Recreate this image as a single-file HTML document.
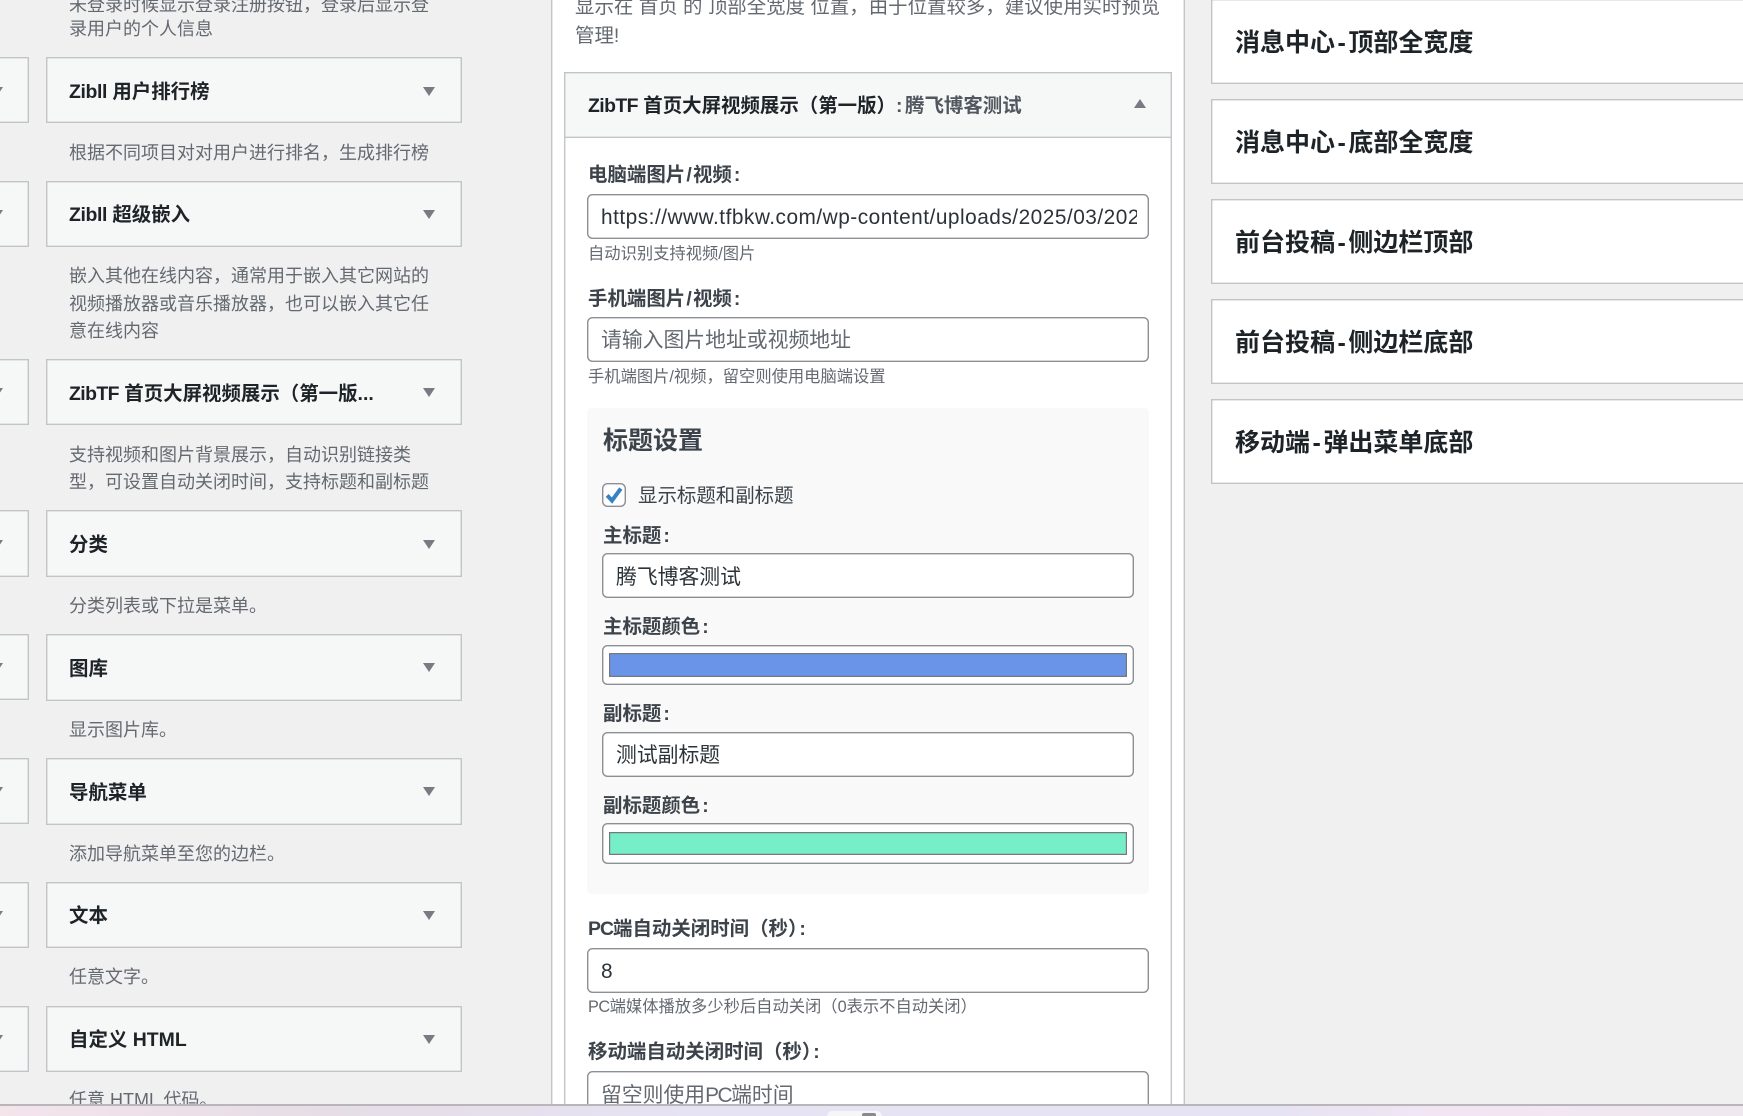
<!DOCTYPE html>
<html lang="zh-CN">
<head>
<meta charset="utf-8">
<title>小工具</title>
<style>
html,body{margin:0;padding:0;width:1743px;height:1116px;overflow:hidden;background:#f0f0f1}
body{position:relative;font-family:"Liberation Sans","Noto Sans CJK SC",sans-serif;color:#1d2327}
div,span{box-sizing:border-box}
.a{position:absolute}
.t{position:absolute;white-space:nowrap;height:28px;line-height:28px}
.box{position:absolute;background:#f6f7f7;box-shadow:inset 0 0 0 1.4px #c3c4c7}
.w{left:46px;width:416px;height:66px}
.p{left:-10px;width:39px;height:66px}
.wt{left:69px;font-size:19.44px;font-weight:700;color:#1d2327}
.d{left:69px;font-size:18px;color:#646970}
.dn{position:absolute;width:0;height:0;border-left:6px solid transparent;border-right:6px solid transparent;border-top:9.5px solid #787c82}
.r{position:absolute;left:1211px;width:560px;height:85px;background:#fff;box-shadow:inset 0 0 0 1.4px #c3c4c7}
.rt{left:1235px;font-size:25px;font-weight:700;color:#1d2327;height:36px;line-height:36px}
.rt span{margin:0 2.5px}
.l{font-size:19.44px;font-weight:700;color:#3c434a}
.l i{font-style:normal;margin-left:2px}
.l b{font-weight:700;margin:0 1.2px}
.h{font-size:16.3px;color:#646970;left:588px}
.i{position:absolute;background:#fff;box-shadow:inset 0 0 0 1.4px #8c8f94;border-radius:5.5px}
.it{font-size:20.83px;color:#2c3338}
.ph{font-size:20.83px;color:#646970}
.sw{position:absolute;left:609px;width:518px;box-shadow:inset 0 0 0 1.2px #77787c}
.zl{letter-spacing:-.4px}
.zt{letter-spacing:-.6px}
</style>
</head>
<body>

<!-- left column -->
<div class="t d" style="top:-9px">未登录时候显示登录注册按钮，登录后显示登</div>
<div class="t d" style="top:15px">录用户的个人信息</div>

<div class="box p" style="top:57px"></div><div class="dn" style="left:-9px;top:87px"></div>
<div class="box w" style="top:57px"></div>
<div class="t wt" style="top:78px"><span class="zl">Zibll</span> 用户排行榜</div><div class="dn" style="left:423px;top:87px"></div>
<div class="t d" style="top:139px">根据不同项目对对用户进行排名，生成排行榜</div>

<div class="box p" style="top:181px"></div><div class="dn" style="left:-9px;top:210px"></div>
<div class="box w" style="top:181px"></div>
<div class="t wt" style="top:201px"><span class="zl">Zibll</span> 超级嵌入</div><div class="dn" style="left:423px;top:210px"></div>
<div class="t d" style="top:262px">嵌入其他在线内容，通常用于嵌入其它网站的</div>
<div class="t d" style="top:290px">视频播放器或音乐播放器，也可以嵌入其它任</div>
<div class="t d" style="top:317px">意在线内容</div>

<div class="box p" style="top:359px"></div><div class="dn" style="left:-9px;top:388px"></div>
<div class="box w" style="top:359px"></div>
<div class="t wt" style="top:380px"><span class="zt">ZibTF</span> 首页大屏视频展示（第一版...</div><div class="dn" style="left:423px;top:388px"></div>
<div class="t d" style="top:441px">支持视频和图片背景展示，自动识别链接类</div>
<div class="t d" style="top:468px">型，可设置自动关闭时间，支持标题和副标题</div>

<div class="box p" style="top:510px;height:67px"></div><div class="dn" style="left:-9px;top:540px"></div>
<div class="box w" style="top:510px;height:67px"></div>
<div class="t wt" style="top:531px">分类</div><div class="dn" style="left:423px;top:540px"></div>
<div class="t d" style="top:592px">分类列表或下拉是菜单。</div>

<div class="box p" style="top:634px"></div><div class="dn" style="left:-9px;top:663px"></div>
<div class="box w" style="top:634px;height:67px"></div>
<div class="t wt" style="top:655px">图库</div><div class="dn" style="left:423px;top:663px"></div>
<div class="t d" style="top:716px">显示图片库。</div>

<div class="box p" style="top:758px"></div><div class="dn" style="left:-9px;top:787px"></div>
<div class="box w" style="top:758px;height:67px"></div>
<div class="t wt" style="top:779px">导航菜单</div><div class="dn" style="left:423px;top:787px"></div>
<div class="t d" style="top:840px">添加导航菜单至您的边栏。</div>

<div class="box p" style="top:882px"></div><div class="dn" style="left:-9px;top:911px"></div>
<div class="box w" style="top:882px"></div>
<div class="t wt" style="top:902px">文本</div><div class="dn" style="left:423px;top:911px"></div>
<div class="t d" style="top:963px">任意文字。</div>

<div class="box p" style="top:1006px"></div><div class="dn" style="left:-9px;top:1035px"></div>
<div class="box w" style="top:1006px"></div>
<div class="t wt" style="top:1026px">自定义 HTML</div><div class="dn" style="left:423px;top:1035px"></div>
<div class="t d" style="top:1086px">任意 HTML 代码。</div>

<!-- middle panel -->
<div class="a" style="left:551px;top:-10px;width:634px;height:1130px;background:#fff;box-shadow:inset 0 0 0 1.4px #c3c4c7"></div>
<div class="t" style="left:575px;top:-7px;font-size:19.44px;color:#646970">显示在 首页 的 顶部全宽度 位置，由于位置较多，建议使用实时预览</div>
<div class="t" style="left:575px;top:22px;font-size:19.44px;color:#646970">管理!</div>

<div class="a" style="left:564px;top:72px;width:608px;height:1050px;background:#fff;box-shadow:inset 0 0 0 1.4px #c3c4c7"></div>
<div class="a" style="left:564px;top:72px;width:608px;height:66px;background:#f6f7f7;box-shadow:inset 0 0 0 1.4px #c3c4c7"></div>
<div class="t" style="left:588px;top:92px;font-size:19.44px;font-weight:700;color:#1d2327"><span class="zt">ZibTF</span> 首页大屏视频展示（第一版）</div>
<div class="t" style="left:896px;top:92px;font-size:19.44px;font-weight:700;color:#50575e">:</div>
<div class="t" style="left:905px;top:92px;font-size:19.44px;font-weight:700;color:#50575e">腾飞博客测试</div>
<div class="a" style="left:1134px;top:99px;width:0;height:0;border-left:6px solid transparent;border-right:6px solid transparent;border-bottom:9.5px solid #787c82"></div>

<div class="t l" style="left:588px;top:161px">电脑端图片<b>/</b>视频<i>:</i></div>
<div class="i" style="left:587px;top:194px;width:562px;height:45px"></div>
<div class="a it" style="left:601px;top:203px;width:535.5px;height:30px;line-height:30px;overflow:hidden;white-space:nowrap;letter-spacing:.5px">https://www.tfbkw.com/wp-content/uploads/2025/03/2025032</div>
<div class="t h" style="top:240px">自动识别支持视频/图片</div>

<div class="t l" style="left:588px;top:285px">手机端图片<b>/</b>视频<i>:</i></div>
<div class="i" style="left:587px;top:317px;width:562px;height:45px"></div>
<div class="t ph" style="left:601px;top:327px">请输入图片地址或视频地址</div>
<div class="t h" style="top:363px">手机端图片/视频，留空则使用电脑端设置</div>

<div class="a" style="left:587px;top:408px;width:562px;height:486px;background:#f9f9f9;border-radius:5.5px"></div>
<div class="t" style="left:603px;top:427px;font-size:25px;font-weight:700;color:#3c434a">标题设置</div>

<div class="i" style="left:602px;top:483px;width:24px;height:24px"></div>
<svg class="a" style="left:602px;top:483px" width="24" height="24" viewBox="0 0 24 24"><path d="M5.2 12.4 L10 17.6 L18.8 5.6" fill="none" stroke="#3582c4" stroke-width="4"/></svg>
<div class="t" style="left:638px;top:482px;font-size:19.44px;color:#3c434a">显示标题和副标题</div>

<div class="t l" style="left:603px;top:522px">主标题<i>:</i></div>
<div class="i" style="left:602px;top:553px;width:532px;height:45px"></div>
<div class="t it" style="left:616px;top:564px">腾飞博客测试</div>

<div class="t l" style="left:603px;top:613px">主标题颜色<i>:</i></div>
<div class="i" style="left:602px;top:645px;width:532px;height:40px"></div>
<div class="sw" style="top:653px;height:24px;background:#6a94e8"></div>

<div class="t l" style="left:603px;top:700px">副标题<i>:</i></div>
<div class="i" style="left:602px;top:732px;width:532px;height:45px"></div>
<div class="t it" style="left:616px;top:742px">测试副标题</div>

<div class="t l" style="left:603px;top:792px">副标题颜色<i>:</i></div>
<div class="i" style="left:602px;top:823px;width:532px;height:41px"></div>
<div class="sw" style="top:832px;height:23px;background:#76efc8"></div>

<div class="t l" style="left:588px;top:915px"><span style="letter-spacing:-1px">PC</span>端自动关闭时间（秒）<i style="margin-left:-8px">:</i></div>
<div class="i" style="left:587px;top:948px;width:562px;height:45px"></div>
<div class="t it" style="left:601px;top:958px">8</div>
<div class="t h" style="top:993px"><span style="letter-spacing:-.5px">PC</span>端媒体播放多少秒后自动关闭（0表示不自动关闭）</div>

<div class="t l" style="left:588px;top:1038px">移动端自动关闭时间（秒）<i style="margin-left:-8px">:</i></div>
<div class="i" style="left:587px;top:1071px;width:562px;height:45px"></div>
<div class="t ph" style="left:601px;top:1082px">留空则使用<span style="letter-spacing:-1.5px">PC</span>端时间</div>

<!-- right column -->
<div class="r" style="top:-1px"></div>
<div class="t rt" style="top:25px">消息中心<span>-</span>顶部全宽度</div>
<div class="r" style="top:99px"></div>
<div class="t rt" style="top:125px">消息中心<span>-</span>底部全宽度</div>
<div class="r" style="top:199px"></div>
<div class="t rt" style="top:225px">前台投稿<span>-</span>侧边栏顶部</div>
<div class="r" style="top:299px"></div>
<div class="t rt" style="top:325px">前台投稿<span>-</span>侧边栏底部</div>
<div class="r" style="top:399px"></div>
<div class="t rt" style="top:425px">移动端<span>-</span>弹出菜单底部</div>

<!-- bottom strip -->
<div class="a" style="left:0;top:1104px;width:1743px;height:12px;background:linear-gradient(90deg,#f3e5ea 0,#e6dde6 320px,#e6e3f3 700px,#e6e3f2 1280px,#f3e6f4 1450px,#efe8ef 1743px)"></div>
<div class="a" style="left:0;top:1104px;width:1743px;height:2px;background:#b9b6bb"></div>
<div class="a" style="left:827px;top:1111px;width:55px;height:6px;background:#f6f5f8;border-radius:5px 5px 0 0"></div>
<div class="a" style="left:862px;top:1113px;width:14px;height:3px;background:#8a898f;border-radius:2px 2px 0 0"></div>
</body>
</html>
